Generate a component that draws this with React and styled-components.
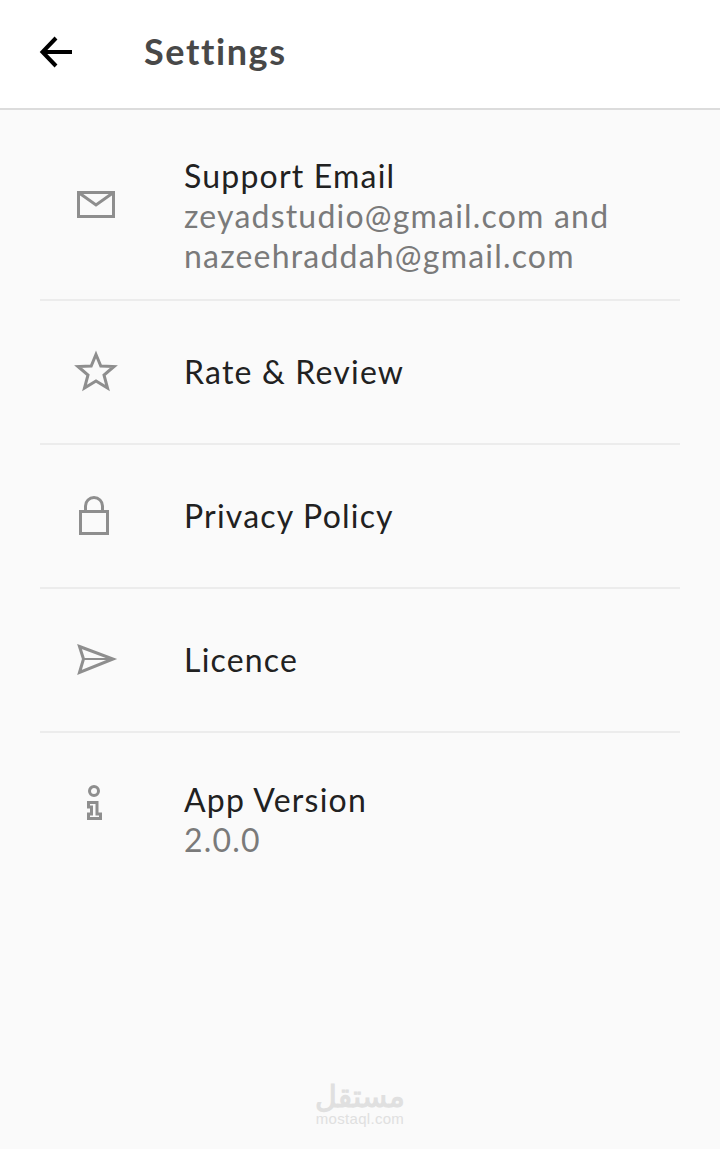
import styled, { createGlobalStyle } from "styled-components";

const GlobalStyle = createGlobalStyle`
  html, body {
    margin: 0;
    padding: 0;
    background: #fafafa;
  }
  body {
    font-family: "Lato", "Noto Sans", sans-serif;
  }
`;

const Page = styled.div`
  position: relative;
  width: 720px;
  height: 1149px;
  display: flex;
  flex-direction: column;
  background: #fafafa;
  overflow: hidden;
`;

const Header = styled.header`
  height: 108px;
  flex: none;
  display: flex;
  align-items: center;
  background: #fff;
  border-bottom: 2px solid #dcdcdc;
  box-sizing: content-box;
`;

const BackButton = styled.div`
  width: 144px;
  height: 108px;
  display: flex;
  align-items: center;
  padding: 0 0 4px 38px;
  box-sizing: border-box;
`;

const Title = styled.h1`
  margin: 0 0 6px;
  font-size: 36px;
  font-weight: 700;
  letter-spacing: 1.6px;
  color: #484848;
`;

const List = styled.div`
  margin: -1px 40px 0;
  flex: 1;
  display: flex;
  flex-direction: column;
`;

const Row = styled.div`
  height: ${(p) => p.$height}px;
  flex: none;
  display: flex;
  box-sizing: border-box;
  border-bottom: ${(p) => (p.$last ? "none" : "2px solid #ececec")};
`;

const IconCell = styled.div`
  width: 144px;
  height: ${(p) => p.$height}px;
  flex: none;
  display: flex;
  align-items: center;
  padding: 0 0 2px 34px;
  box-sizing: border-box;
`;

const RowText = styled.div`
  padding-top: ${(p) => p.$top}px;
  font-size: 32px;
  line-height: 40px;
  letter-spacing: 1.2px;
`;

const RowTitle = styled.div`
  color: #212121;
`;

const RowSub = styled.div`
  color: #7a7a7a;
`;

const Watermark = styled.div`
  position: absolute;
  left: 300px;
  top: 1082px;
  width: 120px;
  display: flex;
  flex-direction: column;
  align-items: center;
  color: #e0e0e0;
`;

const WatermarkArabic = styled.div`
  font-family: "DejaVu Sans", sans-serif;
  font-size: 30px;
  line-height: 29px;
  -webkit-text-stroke: 1px #e0e0e0;
`;

const WatermarkLatin = styled.div`
  font-family: "Liberation Sans", sans-serif;
  font-size: 15px;
  line-height: 15px;
  letter-spacing: 0.3px;
`;

const stroke = { fill: "none", stroke: "#8e8e8e", strokeWidth: 3 };

const MailIcon = () => (
  <svg width="44" height="44" viewBox="0 0 44 44" {...stroke}>
    <rect x="4.500" y="10.500" width="35" height="24" />
    <path d="M4.500 10.500L22 23l17.500-12.500" />
  </svg>
);

const StarIcon = () => (
  <svg width="44" height="44" viewBox="0 0 44 44" {...stroke}>
    <path d="M22 4.500l4.800 11.500L40 16.500l-10 8.500L33.500 38 22 31l-11.500 7L14 25 4 16.500 17.200 16z" />
  </svg>
);

const LockIcon = () => (
  <svg width="44" height="44" viewBox="0 0 44 44" {...stroke}>
    <rect x="6.500" y="17.500" width="27" height="22" />
    <path d="M11.500 17v-5a8.500 8.500 0 0117 0v5" />
  </svg>
);

const SendIcon = () => (
  <svg width="44" height="44" viewBox="0 0 44 44" {...stroke}>
    <path d="M5.500 8.500L39 21 5.500 34.500 9.500 21z" />
    <path d="M9.500 21H39" strokeWidth="2" />
  </svg>
);

const InfoIcon = () => (
  <svg width="44" height="44" viewBox="0 0 44 44" {...stroke}>
    <circle cx="20" cy="9" r="4.500" />
    <path d="M14.500 20.500H23V32h3.500v4.500h-12V32h3v-7h-3z" />
  </svg>
);

const rows = [
  { icon: <MailIcon />, title: "Support Email", sub: ["zeyadstudio@gmail.com and", "nazeehraddah@gmail.com"], height: 192, top: 47 },
  { icon: <StarIcon />, title: "Rate & Review", height: 144, top: 51 },
  { icon: <LockIcon />, title: "Privacy Policy", height: 144, top: 51 },
  { icon: <SendIcon />, title: "Licence", height: 144, top: 51 },
  { icon: <InfoIcon />, title: "App Version", sub: ["2.0.0"], height: 144, top: 47, last: true },
];

export default function App() {
  return (
    <Page>
      <GlobalStyle />
      <Header>
        <BackButton>
          <svg width="38" height="38" viewBox="0 0 38 38" fill="none" stroke="#000" strokeWidth="4">
            <path d="M34 19H5M18 5L4.500 19 18 33" />
          </svg>
        </BackButton>
        <Title>Settings</Title>
      </Header>
      <List>
        {rows.map((row) => (
          <Row key={row.title} $height={row.height} $last={row.last}>
            <IconCell $height={row.height}>{row.icon}</IconCell>
            <RowText $top={row.top}>
              <RowTitle>{row.title}</RowTitle>
              {row.sub && row.sub.map((line) => <RowSub key={line}>{line}</RowSub>)}
            </RowText>
          </Row>
        ))}
      </List>
      <Watermark>
        <WatermarkArabic>مستقل</WatermarkArabic>
        <WatermarkLatin>mostaql.com</WatermarkLatin>
      </Watermark>
    </Page>
  );
}
